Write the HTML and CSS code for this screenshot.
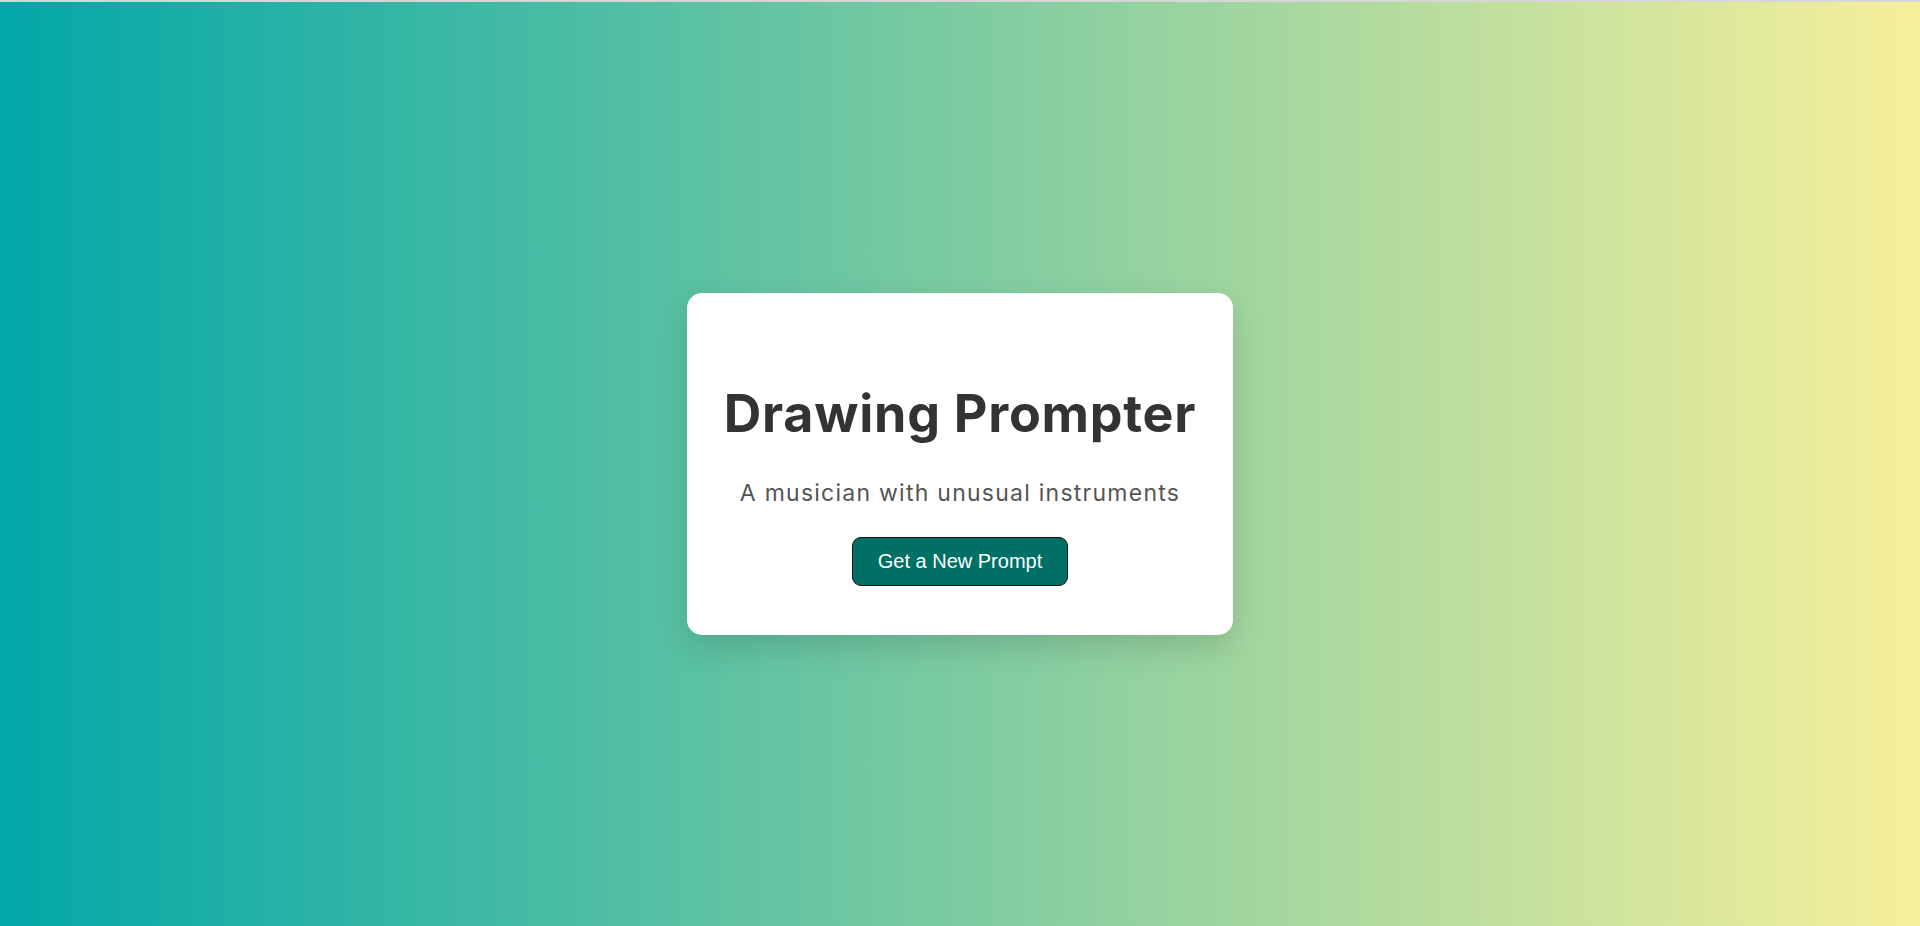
FILE: index.html
```html
<!DOCTYPE html>
<html lang="en">
<head>
<meta charset="utf-8">
<title>Drawing Prompter</title>
<link rel="stylesheet" href="styles.css">
</head>
<body>
<div class="topline"></div>
<main class="stage">
  <section class="card">
    <h1 class="title">Drawing Prompter</h1>
    <p class="prompt">A musician with unusual instruments</p>
    <button class="btn" type="button">Get a New Prompt</button>
  </section>
</main>
</body>
</html>
```
FILE: styles.css
```css
* { box-sizing: border-box; }
html, body { margin: 0; padding: 0; height: 100%; }
body {
  display: flex;
  flex-direction: column;
  font-family: Inter, "Noto Sans", sans-serif;
}
.topline { height: 2px; background: #d6d6d6; flex: none; }
.stage {
  flex: 1;
  display: flex;
  align-items: center;
  justify-content: center;
  background: linear-gradient(to right, #02a7a8, #f7ef9b);
}
.card {
  width: 546px;
  background: #fff;
  border-radius: 15px;
  box-shadow: 0 12px 32px rgba(0, 0, 0, 0.14);
  padding: 90px 20px 49px;
  display: flex;
  flex-direction: column;
  align-items: center;
  text-align: center;
}
.title {
  margin: 0;
  font-size: 52px;
  line-height: 62px;
  font-weight: 700;
  color: #333;
  letter-spacing: 0.75px;
}
.prompt {
  margin: 34px 0 0;
  font-size: 23px;
  line-height: 28px;
  font-weight: 400;
  color: #555;
  letter-spacing: 1.25px;
}
.btn {
  margin-top: 30px;
  font-family: "Liberation Sans", Arial, sans-serif;
  font-size: 20px;
  line-height: 23px;
  padding: 12px 25px;
  color: #fff;
  background: #006f66;
  border: 1px solid #111;
  border-radius: 9px;
  cursor: pointer;
}
```
